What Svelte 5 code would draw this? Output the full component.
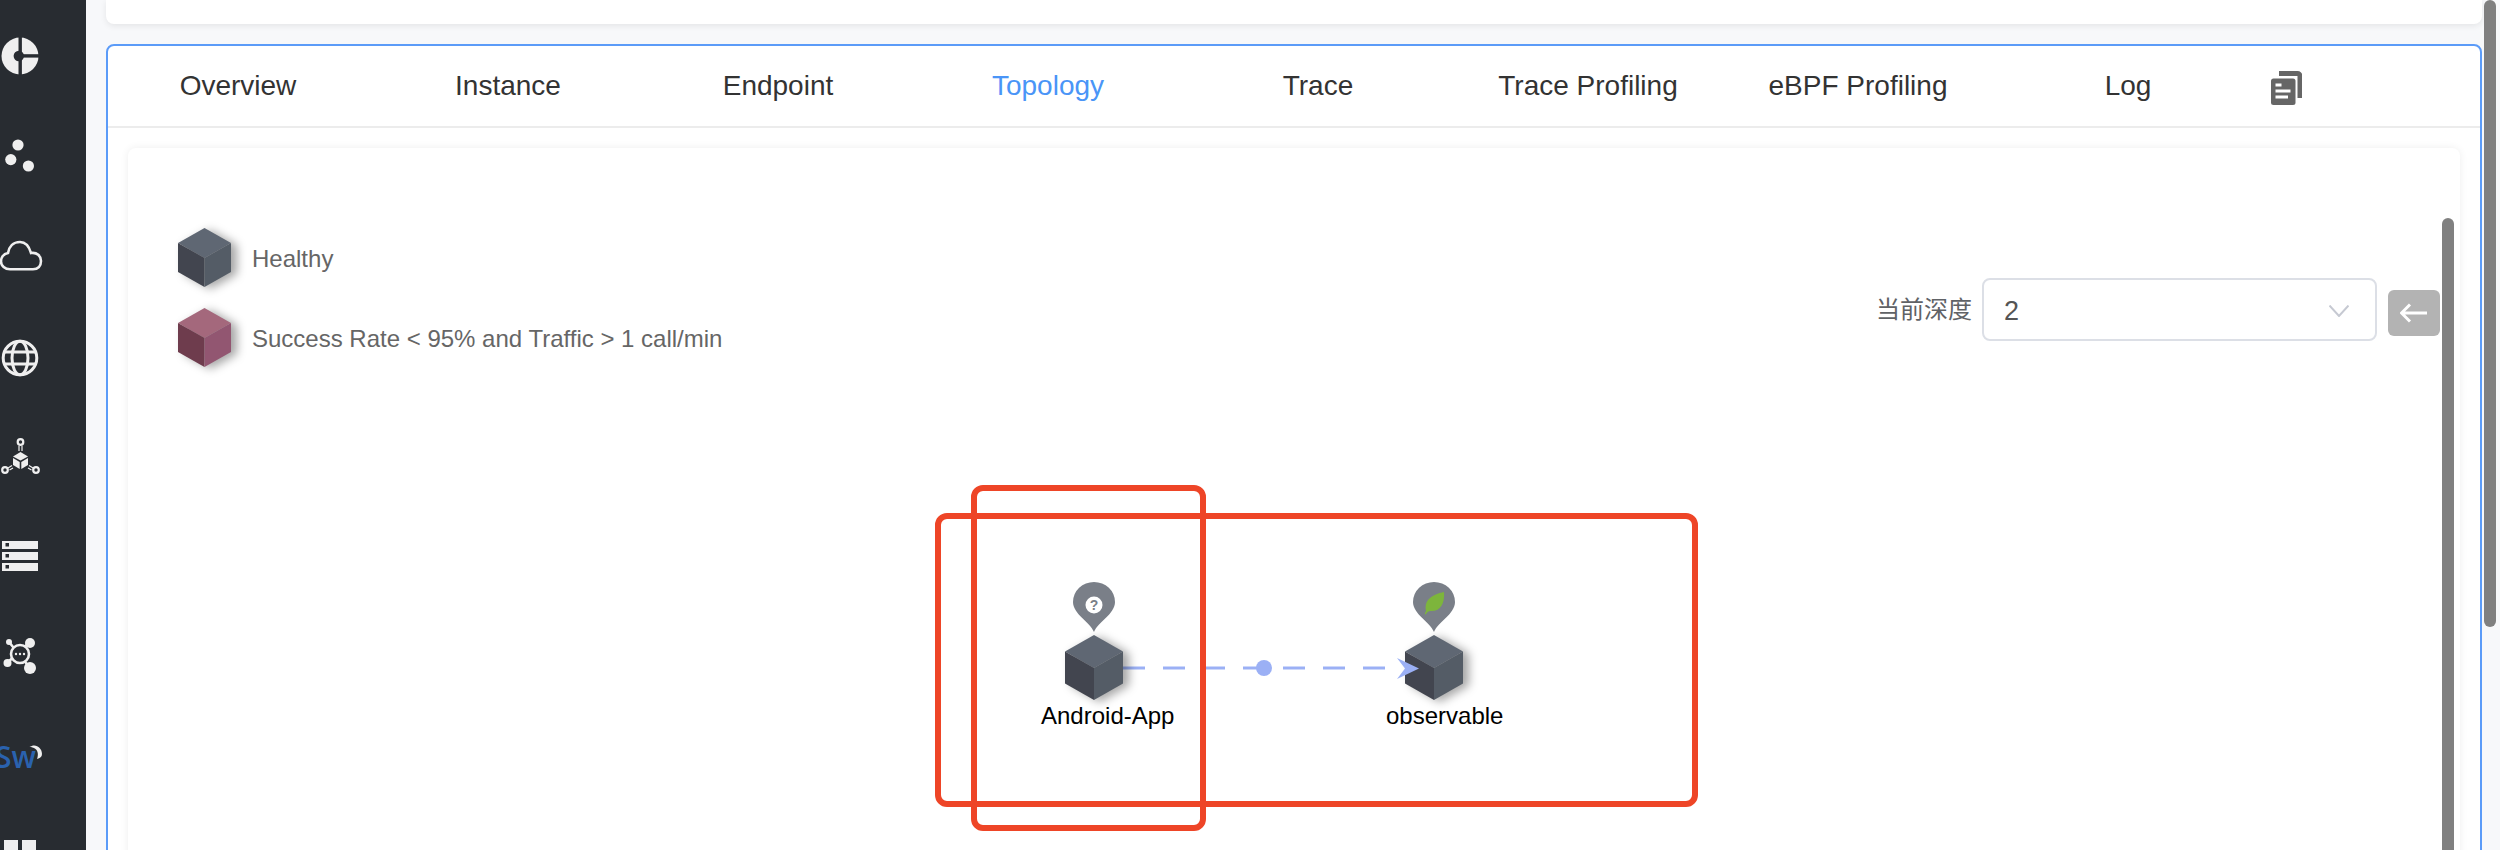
<script>
  const tabs = ['Overview', 'Instance', 'Endpoint', 'Topology', 'Trace', 'Trace Profiling', 'eBPF Profiling', 'Log'];
  const active = 'Topology';
  const legend = [
    { label: 'Healthy', tone: 'ok' },
    { label: 'Success Rate < 95% and Traffic > 1 call/min', tone: 'bad' }
  ];
  // node positions inside the topology canvas, whose origin is the card's corner
  const nodes = [
    { name: 'Android-App', x: 937, y: 487, labelX: 913, kind: 'unknown' },
    { name: 'observable', x: 1277, y: 487, labelX: 1258, kind: 'spring' }
  ];
  const dashes = [0, 40, 80, 120, 160, 200, 240];
</script>

{#snippet cube(tone)}
  <svg class="cube" viewBox="0 0 58 65" preserveAspectRatio="none" aria-hidden="true">
    <polygon class="top {tone}" points="29,0 58,16.5 29,33 0,16.5" />
    <polygon class="left {tone}" points="0,16.5 29,33 29,65 0,48.5" />
    <polygon class="right {tone}" points="58,16.5 29,33 29,65 58,48.5" />
  </svg>
{/snippet}

<div class="app">
  <aside class="rail">
    <svg class="rail-icons" viewBox="0 0 86 850" aria-hidden="true">
      <!-- dashboard dial -->
      <circle class="f" cx="20" cy="56" r="18.5" />
      <rect class="d" x="18.5" y="36" width="3.4" height="40" />
      <rect class="d" x="20" y="54.2" width="20" height="3.4" />
      <circle class="d" cx="18.8" cy="56" r="5.2" />
      <!-- dots -->
      <circle class="f" cx="18" cy="145" r="5.6" />
      <circle class="f" cx="10.8" cy="159.6" r="5.6" />
      <circle class="f" cx="28.4" cy="166" r="5.6" />
      <!-- cloud -->
      <path class="s" stroke-width="2.6" d="M10 269.3H33C38 269.3 41 266 41 261C41 256 37 252 31 253C29 246 25 242 20 242C13 242 9 247 8 253C3 254 1 258 1 261.5C1 266 5 269.3 10 269.3Z" />
      <!-- globe -->
      <circle class="s" stroke-width="3" cx="20" cy="358" r="16.8" />
      <ellipse class="s" stroke-width="3" cx="20" cy="358" rx="8" ry="16.8" />
      <path class="s" stroke-width="3" d="M5 352H35M5 364H35" />
      <!-- service mesh cube -->
      <circle class="s" stroke-width="2.2" cx="20.5" cy="442" r="2.8" />
      <circle class="s" stroke-width="2.2" cx="5" cy="470" r="2.8" />
      <circle class="s" stroke-width="2.2" cx="36" cy="470" r="2.8" />
      <polygon class="f" points="20.5,452 28,456.5 20.5,460.5 13,456.5" />
      <polygon class="f" points="13,458 19.7,462 19.7,469 13,465" />
      <polygon class="f" points="28,458 21.3,462 21.3,469 28,465" />
      <path class="s" stroke-width="1.2" d="M19 446V451M22 446V451M8 468L12 465.6M9.5 470L13 468M33 468L29 465.6M31.5 470L28 468" />
      <!-- servers -->
      <rect class="f" x="2" y="541" width="36" height="8" />
      <rect class="f" x="2" y="552" width="36" height="8" />
      <rect class="f" x="2" y="563" width="36" height="8" />
      <rect class="d" x="5.5" y="543" width="3.5" height="3.5" />
      <rect class="d" x="5.5" y="554" width="3.5" height="3.5" />
      <rect class="d" x="5.5" y="565" width="3.5" height="3.5" />
      <!-- hub -->
      <path class="s" stroke-width="2.6" d="M9 642L30 668M30 642L7 663" />
      <circle class="d" cx="20" cy="654" r="9" />
      <circle class="s" stroke-width="2.6" cx="20" cy="654" r="9" />
      <circle class="f" cx="30" cy="643" r="5" />
      <circle class="f" cx="9" cy="642" r="3" />
      <circle class="f" cx="7.5" cy="663" r="4" />
      <circle class="f" cx="30" cy="668" r="6" />
      <circle class="f" cx="16" cy="654" r="1.2" />
      <circle class="f" cx="20" cy="654" r="1.2" />
      <circle class="f" cx="24" cy="654" r="1.2" />
      <!-- logo crescent -->
      <path class="f" d="M29.5 747C35 743 42 747 42 754C42 757 40 758 37 759C38.5 755 38 751 35.5 749C33.5 747.5 31.5 747 29.5 747Z" />
      <!-- collapse squares -->
      <rect class="f" x="4" y="840" width="14" height="12" />
      <rect class="f" x="22" y="840" width="14" height="12" />
    </svg>
    <span class="logo">Sw</span>
  </aside>

  <main class="main">
    <div class="top-card"></div>

    <section class="panel">
      <nav class="tabs">
        {#each tabs as tab}
          <span class="tab" class:active={tab === active}>{tab}</span>
        {/each}
        <span class="tab doc">
          <svg width="32" height="34" viewBox="0 0 32 34" aria-hidden="true">
            <path class="doc-back" d="M9 2.5H27.5A2.5 2.5 0 0 1 30 5V27" />
            <rect class="doc-front" x="1" y="7.5" width="24.5" height="26.5" rx="2.5" />
            <path class="doc-lines" d="M5.5 14H11.5M5.5 20H20.5M5.5 26H18" />
          </svg>
        </span>
      </nav>

      <div class="card">
        <ul class="legend">
          {#each legend as item}
            <li class="legend-row">
              <span class="legend-cube">{@render cube(item.tone)}</span>
              <span class="legend-text">{item.label}</span>
            </li>
          {/each}
        </ul>

        <div class="tools">
          <label class="depth-label" for="depth">当前深度</label>
          <div class="select" id="depth">
            <span>2</span>
            <svg width="20" height="12" viewBox="0 0 20 12" aria-hidden="true"><path d="M0.5 0.5L10 11L19.5 0.5" /></svg>
          </div>
          <button class="back" aria-label="back">
            <svg width="28" height="20" viewBox="0 0 28 20" aria-hidden="true"><path d="M27 10H2M10 1.5L1.5 10L10 18.5" /></svg>
          </button>
        </div>

        <svg class="topo" viewBox="0 0 2332 702" aria-hidden="true">
          <g class="link">
            {#each dashes as d}
              <line x1={995 + d} x2={1017 + d} y1="520" y2="520" />
            {/each}
          </g>
          <ellipse class="link-dot" cx="1136" cy="520" rx="8" ry="8" />
        </svg>

        {#each nodes as node}
          <div class="node" style="left:{node.x}px;top:{node.y}px">
            <svg class="pin" viewBox="0 0 42 50" aria-hidden="true">
              <path class="pin-body" d="M21 50C17 40 0 32 0 20A21 20 0 0 1 42 20C42 32 25 40 21 50Z" />
              {#if node.kind === 'spring'}
                <path class="leaf" d="M13 29C11 20 16 13 31 10C32 22 27 30 17 29C16 29 14 30 13 32C12 33 11 32 13 29Z" />
              {:else}
                <circle class="q" cx="21" cy="23" r="8.5" />
              {/if}
            </svg>
            {#if node.kind !== 'spring'}
              <span class="q-mark">?</span>
            {/if}
            <div class="node-cube">{@render cube('ok')}</div>
          </div>
          <span class="node-label" style="left:{node.labelX}px">{node.name}</span>
        {/each}

        <svg class="arrow" width="24" height="22" viewBox="0 0 24 22" aria-hidden="true">
          <polygon points="0,0 22,10.5 0,21 8,10.5" />
        </svg>

        <div class="scroll-inner"></div>
      </div>
    </section>
  </main>

  <div class="scroll-outer"></div>
  <div class="mark mark-tall"></div>
  <div class="mark mark-wide"></div>
</div>

<style>
  :global(body) {
    margin: 0;
    background: #f7f8fa;
  }

  .app {
    position: relative;
    display: flex;
    height: 850px;
    overflow: hidden;
    font-family: "Liberation Sans", Arial, "Noto Sans CJK SC", sans-serif;
  }

  .rail {
    position: relative;
    flex: 0 0 86px;
    background: #282c31;
    overflow: hidden;
  }

  .rail-icons {
    display: block;
    width: 86px;
    height: 850px;
  }

  .f { fill: #efefef; }
  .d { fill: #282c31; }
  .s { fill: none; stroke: #efefef; }

  .logo {
    position: absolute;
    left: -5px;
    top: 737px;
    font-family: "Open Sans", sans-serif;
    font-size: 30px;
    font-weight: 600;
    line-height: 40px;
    color: #2a62ae;
  }

  .main {
    flex: 1;
    min-width: 0;
    padding: 0 18px 0 20px;
  }

  .top-card {
    height: 24px;
    background: #fff;
    border-radius: 0 0 8px 8px;
    box-shadow: 0 2px 6px rgba(0, 0, 0, 0.08);
    margin-bottom: 20px;
  }

  .panel {
    height: 830px;
    box-sizing: border-box;
    background: #fff;
    border: 2px solid #5b9bf8;
    border-radius: 8px;
  }

  .tabs {
    display: flex;
    gap: 10px;
    height: 80px;
    border-bottom: 2px solid #ececec;
  }

  .tab {
    flex: 0 0 260px;
    display: flex;
    align-items: center;
    justify-content: center;
    font-size: 28px;
    color: #333;
  }

  .tab.active {
    color: #4a95f7;
  }

  .tab.doc {
    flex: 0 0 40px;
    box-sizing: border-box;
    justify-content: flex-start;
    padding: 4px 0 0 2px;
  }

  .doc-back {
    fill: none;
    stroke: #666;
    stroke-width: 5;
  }

  .doc-front {
    fill: #666;
  }

  .doc-lines {
    fill: none;
    stroke: #fff;
    stroke-width: 3;
  }

  .card {
    position: relative;
    display: flex;
    justify-content: space-between;
    align-items: flex-start;
    margin: 20px 20px 0;
    height: 760px;
    box-sizing: border-box;
    padding: 80px 20px 0 50px;
    background: #fff;
    border-radius: 8px;
    box-shadow: 0 0 8px rgba(0, 0, 0, 0.07);
  }

  .legend {
    list-style: none;
    margin: 0;
    padding: 0;
    display: flex;
    flex-direction: column;
    gap: 21px;
  }

  .legend-row {
    display: flex;
    align-items: center;
    gap: 21px;
    height: 59px;
    font-size: 24px;
    color: #666;
  }

  .legend-text {
    padding-top: 3px;
  }

  .legend-cube {
    display: block;
    width: 53px;
    height: 59px;
  }

  .cube {
    display: block;
    width: 100%;
    height: 100%;
    overflow: visible;
    filter: drop-shadow(6px 2px 5px rgba(0, 0, 0, 0.35));
  }

  .top.ok { fill: #5f6773; }
  .left.ok { fill: #42454f; }
  .right.ok { fill: #545c66; }
  .top.bad { fill: #a4687c; }
  .left.bad { fill: #6e3c4d; }
  .right.bad { fill: #925671; }

  .tools {
    display: flex;
    align-items: flex-start;
    margin-top: 50px;
  }

  .depth-label {
    font-size: 24px;
    line-height: 63px;
    color: #606266;
    margin-right: 10px;
  }

  .select {
    display: flex;
    align-items: center;
    justify-content: space-between;
    width: 395px;
    height: 63px;
    box-sizing: border-box;
    padding: 3px 26px 0 20px;
    border: 2px solid #dcdfe6;
    border-radius: 8px;
    font-size: 27px;
    color: #555;
  }

  .select path {
    fill: none;
    stroke: #c6c9d2;
    stroke-width: 2;
  }

  .back {
    display: flex;
    align-items: center;
    justify-content: center;
    width: 52px;
    height: 46px;
    margin: 12px 0 0 11px;
    padding: 0;
    border: 0;
    border-radius: 6px;
    background: #b3b3b3;
  }

  .back path {
    fill: none;
    stroke: #fff;
    stroke-width: 3;
  }

  .topo {
    position: absolute;
    left: 0;
    top: 0;
    width: 2332px;
    height: 702px;
    pointer-events: none;
  }

  .link line {
    stroke: #9bb0f5;
    stroke-width: 3;
  }

  .link-dot {
    fill: #9bb0f5;
  }

  .node {
    position: absolute;
    width: 58px;
  }

  .pin {
    display: block;
    width: 42px;
    height: 50px;
    margin: -53px 0 0 8px;
  }

  .pin-body {
    fill: #7a7f88;
  }

  .leaf {
    fill: #7db53c;
  }

  .q {
    fill: #fff;
  }

  .q-mark {
    position: absolute;
    left: 8px;
    top: -39px;
    width: 42px;
    text-align: center;
    font-size: 14px;
    line-height: 18px;
    font-weight: 700;
    color: #7a7f88;
  }

  .node-cube {
    width: 58px;
    height: 65px;
    margin-top: 3px;
  }

  .node-label {
    position: absolute;
    top: 554px;
    font-size: 24px;
    line-height: 28px;
    color: #000;
    white-space: nowrap;
  }

  .arrow {
    position: absolute;
    left: 1269px;
    top: 510px;
  }

  .arrow polygon {
    fill: #9bb0f5;
  }

  .scroll-inner {
    position: absolute;
    top: 70px;
    right: 6px;
    width: 12px;
    height: 700px;
    border-radius: 6px;
    background: #808080;
  }

  .scroll-outer {
    position: absolute;
    top: 0;
    left: 2484px;
    width: 12px;
    height: 627px;
    border-radius: 6px;
    background: #808080;
  }

  .mark {
    position: absolute;
    box-sizing: border-box;
    border: 6px solid #ee4527;
    border-radius: 12px;
  }

  .mark-tall {
    left: 971px;
    top: 485px;
    width: 235px;
    height: 346px;
  }

  .mark-wide {
    left: 935px;
    top: 513px;
    width: 763px;
    height: 294px;
  }
</style>
